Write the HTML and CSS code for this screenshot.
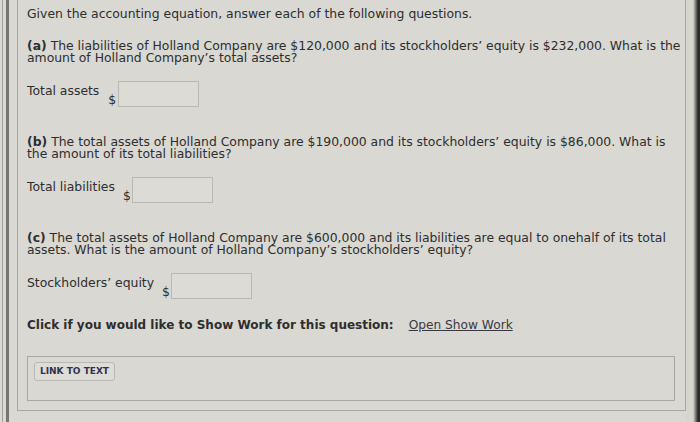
FILE: index.html
```html
<!DOCTYPE html>
<html>
<head>
<meta charset="utf-8">
<link rel="stylesheet" href="styles.css">
</head>
<body>
<div class="page">
  <div class="rail"></div>
  <div class="panel">
    <p class="intro">Given the accounting equation, answer each of the following questions.</p>
    <p class="q"><b>(a)</b> The liabilities of Holland Company are $120,000 and its stockholders’ equity is $232,000. What is the<br>amount of Holland Company’s total assets?</p>
    <div class="answer a1">
      <span class="label">Total assets</span>
      <span class="dollar">$</span>
      <span class="input"></span>
    </div>
    <p class="q q2"><b>(b)</b> The total assets of Holland Company are $190,000 and its stockholders’ equity is $86,000. What is<br>the amount of its total liabilities?</p>
    <div class="answer a2">
      <span class="label">Total liabilities</span>
      <span class="dollar">$</span>
      <span class="input"></span>
    </div>
    <p class="q q3"><b>(c)</b> The total assets of Holland Company are $600,000 and its liabilities are equal to onehalf of its total<br>assets. What is the amount of Holland Company’s stockholders’ equity?</p>
    <div class="answer a3">
      <span class="label">Stockholders’ equity</span>
      <span class="dollar">$</span>
      <span class="input"></span>
    </div>
    <p class="work"><b>Click if you would like to Show Work for this question:</b><a class="link" href="#">Open Show Work</a></p>
    <div class="linkbox">
      <span class="btn">LINK TO TEXT</span>
    </div>
  </div>
  <div class="edge"></div>
</div>
</body>
</html>
```
FILE: styles.css
```css
html, body {
  margin: 0;
  padding: 0;
}
body {
  background: #d9d8d2;
  font-family: "DejaVu Sans", Verdana, sans-serif;
  color: #2e2e2e;
  width: 700px;
  height: 422px;
  overflow: hidden;
}
.page {
  display: flex;
  height: 422px;
}
.rail {
  width: 17px;
  flex: none;
  background: linear-gradient(to right, transparent 2px, #a3a29b 2px 3px, transparent 3px 6px, #76756e 6px 9px, transparent 9px);
}
.panel {
  width: 669px;
  flex: none;
  height: 411px;
  box-sizing: border-box;
  border: 1px solid #a8a8a2;
  border-top: none;
  padding: 0 0 0 9px;
  font-size: 12.4px;
  line-height: 12.5px;
}
.edge {
  flex: 1;
  background: linear-gradient(to right, #d6d5cf 0 7px, #b4b3ad 8px, #6e6d69 10px, #2a2a2a 12px);
}
p { margin: 0; }
.intro {
  padding-top: 8px;
}
.q {
  margin-top: 19px;
}
.answer {
  display: flex;
  align-items: flex-start;
  margin-top: 16px;
}
.label {
  padding-top: 4px;
}
.dollar {
  align-self: flex-end;
}
.input {
  display: block;
  width: 81px;
  height: 26px;
  box-sizing: border-box;
  border: 1px solid #b9b8b2;
  background: #dcdbd5;
}
.a1 .dollar { margin: 0 2px 0 9px; }
.a2 .dollar { margin: 0 1px 0 8px; }
.a3 .dollar { margin: 0 1px 0 8px; }
.q2, .q3 { margin-top: 29px; }
.work {
  margin-top: 20px;
  font-size: 12px;
}
.link {
  margin-left: 15px;
  color: #3a3a44;
  text-decoration: underline;
  font-size: 12.2px;
}
.linkbox {
  margin-top: 25px;
  margin-right: 10px;
  height: 45px;
  box-sizing: border-box;
  border: 1px solid #a8a8a2;
  padding: 5px 6px;
}
.btn {
  display: inline-block;
  font-size: 9px;
  line-height: 11px;
  font-weight: bold;
  color: #2e3350;
  padding: 3px 5px;
  border: 1px solid #b9b8b2;
  border-radius: 3px;
  background: #dedcd6;
}
```
